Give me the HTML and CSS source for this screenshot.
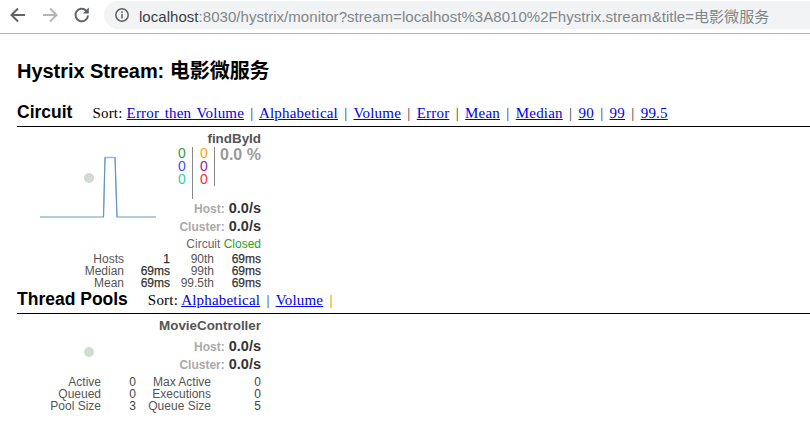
FILE: index.html
```html
<!DOCTYPE html>
<html lang="en">
<head>
<meta charset="utf-8">
<title>Hystrix Stream</title>
<link rel="stylesheet" href="styles.css">
</head>
<body>
<header class="toolbar">
  <svg class="nav-icon" width="20" height="20" viewBox="0 0 20 20"><path d="M17 10H4M10 3.5 3.5 10l6.5 6.5" fill="none" stroke="#5f6368" stroke-width="2"/></svg>
  <svg class="nav-icon" width="20" height="20" viewBox="0 0 20 20"><path d="M3 10h13M10 3.5l6.5 6.5-6.5 6.5" fill="none" stroke="#b4b6b9" stroke-width="2"/></svg>
  <svg class="nav-icon" width="20" height="20" viewBox="0 0 20 20"><path d="M16 10.5A6.300 6.300 0 1 1 14.200 5.600" fill="none" stroke="#5f6368" stroke-width="2"/><path d="M16.800 2.600v6h-6z" fill="#5f6368"/></svg>
  <div class="omnibox">
    <svg class="info" width="16" height="16" viewBox="0 0 16 16"><circle cx="8" cy="8" r="6.200" fill="none" stroke="#5f6368" stroke-width="1.500"/><path d="M8 7v4.500M8 4.300v1.600" stroke="#5f6368" stroke-width="1.500"/></svg>
    <span class="url"><span class="host">localhost</span>:8030/hystrix/monitor?stream=localhost%3A8010%2Fhystrix.stream&amp;title=电影微服务</span>
  </div>
</header>
<main class="page">
  <h1 class="title">Hystrix Stream: 电影微服务</h1>

  <section class="section">
    <div class="section-head">
      <h2>Circuit</h2>
      <div class="sort">Sort: <a href="#" class="wide">Error then Volume</a> <i>|</i> <a href="#">Alphabetical</a> <i>|</i> <a href="#">Volume</a> <i>|</i> <a href="#">Error</a> <i>|</i> <a href="#">Mean</a> <i>|</i> <a href="#">Median</a> <i>|</i> <a href="#">90</a> <i>|</i> <a href="#">99</a> <i>|</i> <a href="#">99.5</a></div>
    </div>
    <article class="card circuit">
      <svg class="spark" width="116" height="62" viewBox="0 0 116 62"><path d="M0 61H63.500L65 1.500H75L77 61H116" fill="none" stroke="#9dbbd8" stroke-width="1.300"/><path d="M65 1.500 63.500 61M75 1.500 77 61" fill="none" stroke="#5f93c0" stroke-width="1"/></svg>
      <span class="dot dot-circuit"></span>
      <div class="name">findById</div>
      <div class="counters">
        <div class="count-col first"><span class="c-green">0</span><span class="c-blue">0</span><span class="c-teal">0</span></div>
        <div class="count-col second"><span class="c-orange">0</span><span class="c-purple">0</span><span class="c-red">0</span></div>
        <div class="rate">0.0 %</div>
      </div>
      <div class="stat first-stat"><b>Host:</b> <strong>0.0/s</strong></div>
      <div class="stat"><b>Cluster:</b> <strong>0.0/s</strong></div>
      <div class="status">Circuit <span class="c-closed">Closed</span></div>
      <div class="metrics metrics-circuit">
        <span>Hosts</span><b class="dark">1</b><span>90th</span><b>69ms</b>
        <span>Median</span><b>69ms</b><span>99th</span><b>69ms</b>
        <span>Mean</span><b>69ms</b><span>99.5th</span><b>69ms</b>
      </div>
    </article>
  </section>

  <section class="section">
    <div class="section-head pools-head">
      <h2>Thread Pools</h2>
      <div class="sort">Sort: <a href="#">Alphabetical</a> <i>|</i> <a href="#">Volume</a> <i class="amber">|</i></div>
    </div>
    <article class="card pool">
      <span class="dot dot-pool"></span>
      <div class="name">MovieController</div>
      <div class="stat pool-stat"><b>Host:</b> <strong>0.0/s</strong></div>
      <div class="stat"><b>Cluster:</b> <strong>0.0/s</strong></div>
      <div class="metrics metrics-pool">
        <span>Active</span><b>0</b><span>Max Active</span><b>0</b>
        <span>Queued</span><b>0</b><span>Executions</span><b>0</b>
        <span>Pool Size</span><b>3</b><span>Queue Size</span><b>5</b>
      </div>
    </article>
  </section>
</main>
</body>
</html>
```

FILE: styles.css
```css
* { box-sizing: border-box; }
html, body { margin: 0; padding: 0; background: #fff; overflow: hidden; }
body { width: 810px; height: 424px; font-family: "Liberation Sans", "Noto Sans CJK SC", sans-serif; }

.toolbar { height: 34px; display: flex; align-items: flex-start; padding: 5px 0 0 8px; border-bottom: 1px solid #b5b5b5; gap: 12px; }
.nav-icon { flex: none; }
.omnibox { margin-top: -4px; height: 28px; flex: 1; background: #f1f3f4; border-radius: 14px 0 0 14px; display: flex; align-items: center; padding-left: 10px; }
.info { flex: none; margin-right: 9px; }
.url { font-size: 15px; color: #80868b; white-space: nowrap; letter-spacing: 0.04px; }
.host { color: #3c4043; }

.page { padding-left: 17px; }
.title { margin: 25px 0 0; font-size: 20px; line-height: 24px; font-weight: bold; color: #000; letter-spacing: -0.04px; }

.section-head { display: flex; align-items: baseline; border-bottom: 1px solid #000; height: 26px; margin-top: 18px; line-height: 22px; }
.section-head h2 { margin: 0; font-size: 17.5px; font-weight: bold; color: #000; }
.pools-head { margin-top: -1px; }
.sort { margin-left: 20px; font-family: "Liberation Serif", serif; font-size: 15px; letter-spacing: 0.2px; color: #000; white-space: nowrap; }
.sort a { color: #00e; text-decoration: underline; }
.sort a.wide { word-spacing: 1.5px; }
.sort i { font-style: normal; margin: 0 2.3px; color: #333; }
.sort i.amber { color: #b07a10; }

.card { position: relative; width: 244px; display: flex; flex-direction: column; align-items: flex-end; color: #666; font-size: 12px; }
.spark { position: absolute; left: 23px; top: 29px; }
.dot { position: absolute; left: 67px; width: 10px; height: 10px; border-radius: 50%; background: #cfdccf; }
.dot-circuit { top: 46px; }
.dot-pool { top: 33px; }

.name { font-size: 13.4px; line-height: 15px; font-weight: bold; color: #555; margin-top: 4px; }
.counters { display: flex; align-items: flex-start; height: 52px; margin-top: 1px; width: 83px; }
.count-col { display: flex; flex-direction: column; font-size: 14px; line-height: 13px; width: 22px; text-align: left; }
.count-col.first { height: 52px; border-right: 1px solid #888; width: 15px; }
.count-col.second { height: 39px; border-right: 1px solid #888; padding-left: 7px; }
.rate { font-size: 16px; font-weight: bold; color: #999; margin-left: 5px; line-height: 16px; }
.c-green { color: #3a9c3a; } .c-blue { color: #4a4aff; } .c-teal { color: #2ad2a5; }
.c-orange { color: #ffa500; } .c-purple { color: #90209c; } .c-red { color: #ff2a2a; }
.c-closed { color: #2c9c2c; }

.stat { line-height: 17px; font-size: 14.5px; color: #333; }
.stat b { font-size: 12px; color: #aaa; }
.stat strong { font-weight: bold; color: #333; }
.first-stat { margin-top: 1px; }
.pool-stat { margin-top: 5px; }
.status { font-size: 12px; line-height: 16px; margin-bottom: 1px; }

.metrics { display: grid; width: 100%; font-size: 12px; line-height: 12px; text-align: right; color: #555; }
.metrics b { font-weight: normal; color: #333; }
.metrics-circuit { grid-template-columns: 107px 46px 44px 47px; }
.metrics-circuit b { -webkit-text-stroke: 0.25px #333; }
.metrics-pool { grid-template-columns: 84px 35px 75px 50px; margin-top: 2px; }
.metrics-pool b { color: #444; }
```
